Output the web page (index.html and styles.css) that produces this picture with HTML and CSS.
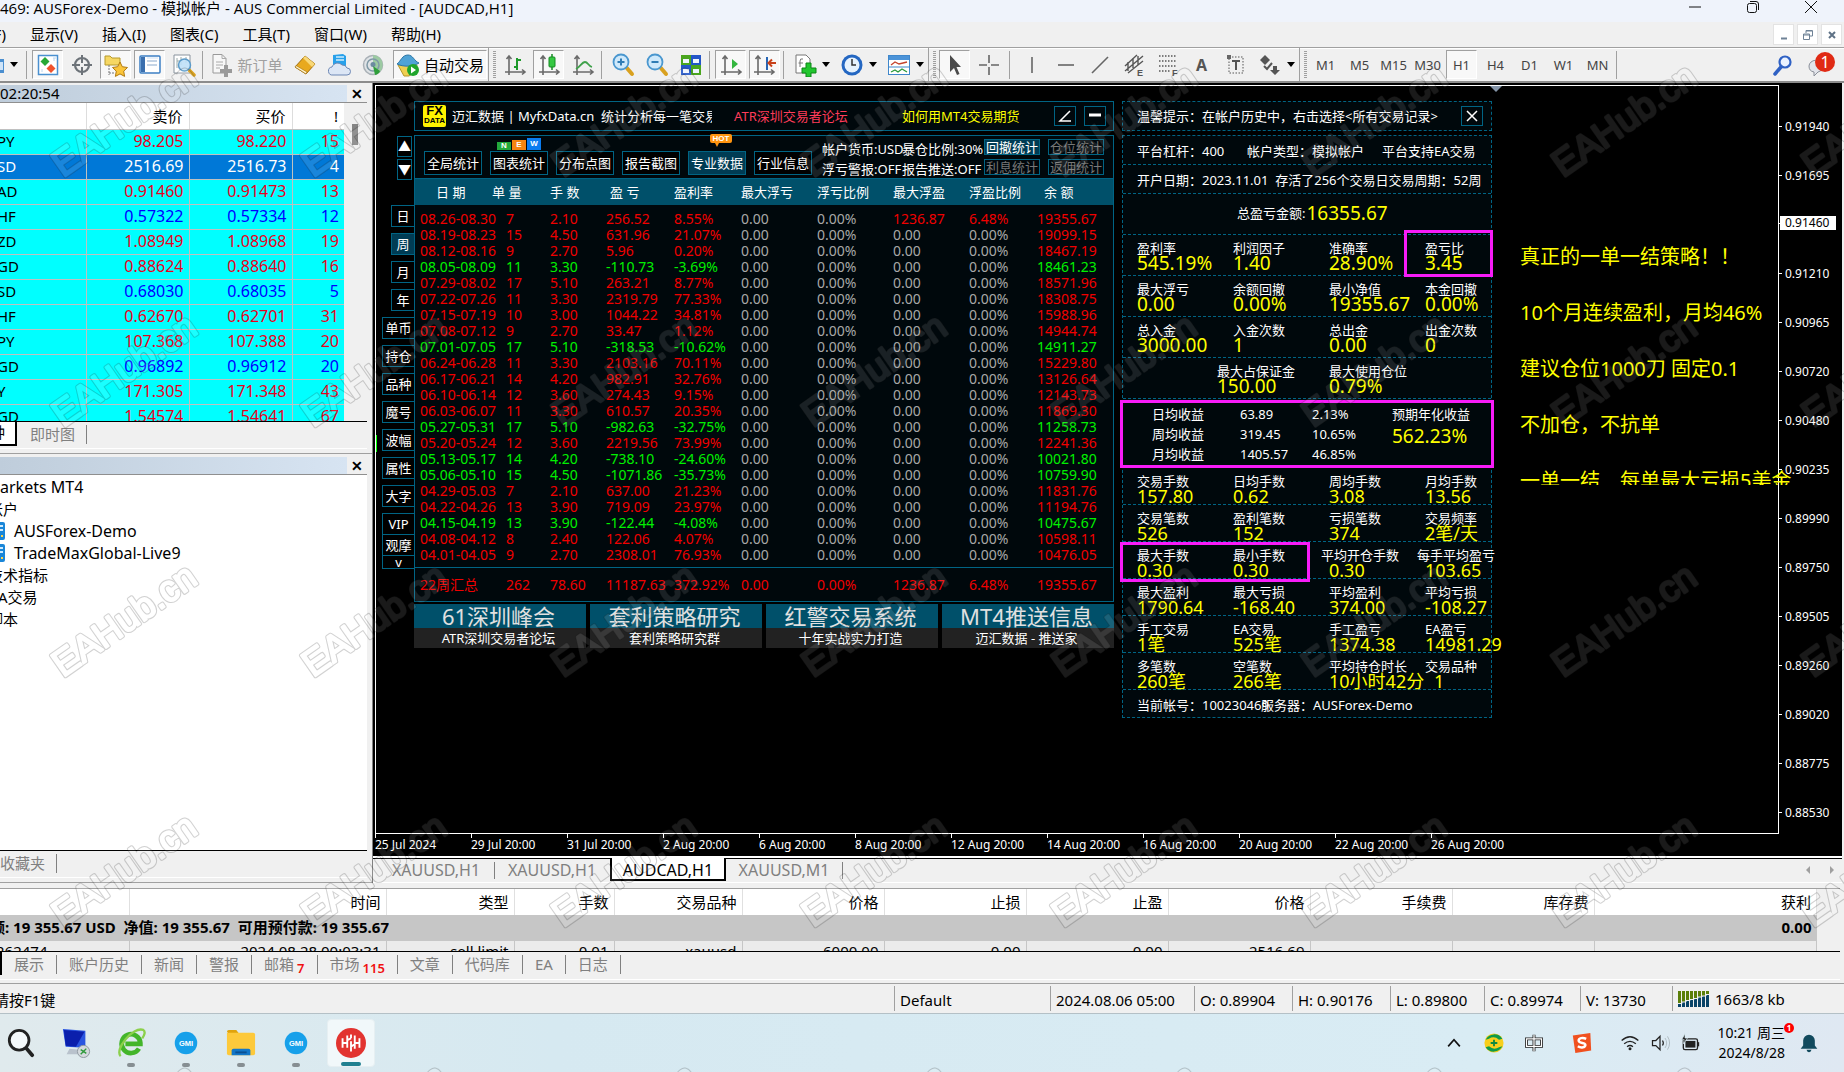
FILE: index.html
```html
<!DOCTYPE html>
<html lang="zh-CN">
<head>
<meta charset="utf-8">
<title>AUSForex-Demo - [AUDCAD,H1]</title>
<link rel="stylesheet" href="styles.css">
</head>
<body>
<header class="titlebar">
  <h1 class="title">469: AUSForex-Demo - 模拟帐户 - AUS Commercial Limited - [AUDCAD,H1]</h1>
  <div class="winctl">
    <button aria-label="最小化"><svg width="14" height="14" viewBox="0 0 14 14"><path d="M1 7h12" stroke="#111" fill="none"/></svg></button>
    <button aria-label="还原"><svg width="14" height="14" viewBox="0 0 14 14"><rect x="1.500" y="3.500" width="9" height="9" rx="2" stroke="#111" fill="none"/><path d="M4 1.500h6a2.500 2.500 0 0 1 2.500 2.500v6" stroke="#111" fill="none"/></svg></button>
    <button aria-label="关闭"><svg width="14" height="14" viewBox="0 0 14 14"><path d="M1 1l12 12M13 1L1 13" stroke="#111" fill="none"/></svg></button>
  </div>
</header>
<nav class="menubar">
  <button class="cut">(F)</button><button>显示(V)</button><button>插入(I)</button><button>图表(C)</button><button>工具(T)</button><button>窗口(W)</button><button>帮助(H)</button>
  <div class="mdictl">
    <button aria-label="最小化图表"><svg width="12" height="12" viewBox="0 0 12 12"><path d="M3 9.500h6" stroke="#6f8296" stroke-width="2"/></svg></button>
    <button aria-label="还原图表"><svg width="12" height="12" viewBox="0 0 12 12"><path d="M4 4V1.500h6.500V7H8M1.500 5h6v5.500h-6zM1.500 6h6M4 2h6" stroke="#6f8296" fill="none"/></svg></button>
    <button aria-label="关闭图表"><svg width="12" height="12" viewBox="0 0 12 12"><path d="M3 3l6 6M9 3L3 9" stroke="#5f7286" stroke-width="2"/></svg></button>
  </div>
</nav>

<div class="toolbar">
  <button class="tool first" aria-label="新图表"><svg width="6" height="24" viewBox="0 0 6 24"><path d="M0 6h4v14H0z" fill="#4b8fd0"/><path d="M0 9h3v8H0z" fill="#cfe4f8"/></svg><i class="caret"></i></button>
  <span class="sep"></span>
  <button class="tool on" aria-label="市场报价"><svg viewBox="0 0 24 24"><rect x="2.500" y="2.500" width="19" height="19" fill="#fff" stroke="#4a90d0" stroke-width="1.500"/><path d="M9 4l4.500 4.500L9 13 4.500 8.500z" fill="#27a835"/><path d="M15 20l-4.500-4.500L15 11l4.500 4.500z" fill="#f0532d"/><path d="M6 16v3M18 5v3M17 5h3" stroke="#bcd6ee"/></svg></button>
  <button class="tool" aria-label="数据窗口"><svg viewBox="0 0 24 24"><circle cx="12" cy="12" r="7" fill="none" stroke="#6d7379" stroke-width="2.200"/><path d="M12 2v8M12 14v8M2 12h8M14 12h8" stroke="#6d7379" stroke-width="2"/></svg></button>
  <button class="tool on" aria-label="导航"><svg viewBox="0 0 24 24"><path d="M1 3h5l2 2h8v7H1z" fill="#f6d763" stroke="#b69a2c"/><path d="M5 12v10M5 20h6" stroke="#777" stroke-dasharray="2 1"/><path d="M16 9l2.300 4.700 5.200.8-3.800 3.700.9 5.200-4.600-2.500-4.600 2.500.9-5.200-3.800-3.700 5.200-.8z" fill="#fbc53a" stroke="#b07a12"/></svg></button>
  <button class="tool on" aria-label="终端"><svg viewBox="0 0 24 24"><rect x="2" y="3" width="20" height="17" rx="1" fill="#fff" stroke="#3c7fc4" stroke-width="1.500"/><path d="M3 4h4v15H3z" fill="#3b6fae"/><path d="M9 8h10M9 12h10" stroke="#8aa9cc"/><path d="M9 5h11" stroke="#cfe0f3"/></svg></button>
  <button class="tool" aria-label="策略测试"><svg viewBox="0 0 24 24"><path d="M2 2h16v18H2z" fill="#fff" stroke="#8a949e"/><path d="M5 5v10M9 4v8M5 8h3M14 4v6" stroke="#9aa"/><path d="M17 17l5 5" stroke="#d9a11f" stroke-width="3.500" stroke-linecap="round"/><circle cx="12.500" cy="12" r="6" fill="#bfe0f7" fill-opacity=".9" stroke="#5b9bc9" stroke-width="1.500"/></svg></button>
  <span class="sep"></span>
  <button class="tool order" disabled><svg viewBox="0 0 24 24"><path d="M3 1.500h9l4 4V20H3z" fill="#f7f7f7" stroke="#999"/><path d="M12 1.500v4h4M6 9h7M6 12h7M6 15h4" stroke="#aaa" fill="none"/><path d="M14 12h4v4h4v4h-4v4h-4v-4h-4v-4h4z" fill="#9a9a9a"/></svg>新订单</button>
  <button class="tool" aria-label="MetaEditor"><svg viewBox="0 0 24 24"><path d="M2 14L12 3l10 8-9 10z" fill="#e8a91e" stroke="#a06d0c"/><path d="M12 3l10 8-3 3-9-9z" fill="#f8d878"/><path d="M2 14l11 7 1-2-11-6.500z" fill="#fff3c9" stroke="#a06d0c" stroke-width=".6"/></svg></button>
  <button class="tool" aria-label="虚拟主机"><svg viewBox="0 0 24 24"><path d="M6 2l10-1 3 2v10H6z" fill="#27a0ea"/><path d="M9 4h8M9 7h8" stroke="#cdeafb" stroke-width="1.500"/><path d="M6 22a4 4 0 0 1-1-8 6 6 0 0 1 10-2 5 5 0 0 1 5 3 3.500 3.500 0 0 1 0 7z" fill="#dce6f5" stroke="#6d87b4"/></svg></button>
  <button class="tool" aria-label="信号"><svg viewBox="0 0 24 24"><circle cx="12" cy="12" r="9.500" fill="#dfe3e6" stroke="#a9b0b6" stroke-width="1.500"/><path d="M12 2a10 10 0 0 1 4 19l-4-9z" fill="#9ccaa2"/><circle cx="12" cy="12" r="6" fill="none" stroke="#7f99a6" stroke-width="1.500"/><circle cx="12" cy="11.500" r="2.500" fill="#6c8ba0"/><path d="M12 13l2 9q4-1 5-4z" fill="#2e9e3a"/></svg></button>
  <button class="tool auto"><svg viewBox="0 0 24 24"><path d="M2 12h19l-2 7-6 4H8z" fill="#f0cf50" stroke="#b4962a"/><path d="M1 11c4-3 5-9 11-9 5 0 6 6 11 8-6 4-16 4-22 1z" fill="#4fa3d6" stroke="#2d76a5"/><circle cx="17" cy="17" r="6" fill="#1fa52c"/><path d="M15 13.500l5 3.500-5 3.500z" fill="#fff"/></svg>自动交易</button>
  <span class="grip"></span>
  <button class="tool" aria-label="柱状图"><svg viewBox="0 0 24 24"><path d="M6 3v19M2 19h20M3.500 6L6 3l2.500 3M19 16.500l3 2.500-3 2.500" stroke="#6a6a6a" stroke-width="1.600" fill="none"/><path d="M14 5v12M14 7h4M11 14h3" stroke="#1e9a2b" stroke-width="2"/></svg></button>
  <button class="tool on" aria-label="蜡烛图"><svg viewBox="0 0 24 24"><path d="M6 3v19M2 19h20M3.500 6L6 3l2.500 3M19 16.500l3 2.500-3 2.500" stroke="#6a6a6a" stroke-width="1.600" fill="none"/><path d="M15 1v16" stroke="#158a22" stroke-width="1.500"/><rect x="12" y="4" width="6" height="10" rx="1" fill="#35c842" stroke="#158a22"/></svg></button>
  <button class="tool" aria-label="折线图"><svg viewBox="0 0 24 24"><path d="M6 3v19M2 19h20M3.500 6L6 3l2.500 3M19 16.500l3 2.500-3 2.500" stroke="#6a6a6a" stroke-width="1.600" fill="none"/><path d="M5 16c4-2 6-7 9-7s3 4 7 5" stroke="#3fa14a" stroke-width="1.800" fill="none"/></svg></button>
  <span class="sep"></span>
  <button class="tool" aria-label="放大"><svg viewBox="0 0 24 24"><path d="M15 14l6 7" stroke="#d9a11f" stroke-width="4" stroke-linecap="round"/><circle cx="10" cy="9" r="7.500" fill="#cfe9fb" stroke="#4a97cf" stroke-width="1.800"/><path d="M10 5.500v7M6.500 9h7" stroke="#2f7cb5" stroke-width="2"/></svg></button>
  <button class="tool" aria-label="缩小"><svg viewBox="0 0 24 24"><path d="M15 14l6 7" stroke="#d9a11f" stroke-width="4" stroke-linecap="round"/><circle cx="10" cy="9" r="7.500" fill="#cfe9fb" stroke="#4a97cf" stroke-width="1.800"/><path d="M6.500 9h7" stroke="#2f7cb5" stroke-width="2"/></svg></button>
  <button class="tool" aria-label="平铺窗口"><svg viewBox="0 0 24 24"><path d="M2 2h10v10H2z" fill="#4aa51e"/><path d="M12 2h10v10H12z" fill="#2456c8"/><path d="M2 12h10v10H2z" fill="#2456c8"/><path d="M12 12h10v10H12z" fill="#4aa51e"/><path d="M4 6h6v4H4zM14 6h6v4h-6zM4 16h6v4H4zM14 16h6v4h-6z" fill="#eef4ff"/></svg></button>
  <span class="sep"></span>
  <button class="tool on" aria-label="自动滚动"><svg viewBox="0 0 24 24"><path d="M6 3v19M2 19h20M3.500 6L6 3l2.500 3M19 16.500l3 2.500-3 2.500" stroke="#6a6a6a" stroke-width="1.600" fill="none"/><path d="M13 6l6 5-6 5z" fill="#34b63f"/></svg></button>
  <button class="tool on" aria-label="图表平移"><svg viewBox="0 0 24 24"><path d="M5 3v19M1 19h20M2.500 6L5 3l2.500 3M18 16.500l3 2.500-3 2.500" stroke="#6a6a6a" stroke-width="1.600" fill="none"/><path d="M14 4v13" stroke="#2766b5" stroke-width="2"/><path d="M23 10h-6M19 6.500L15.500 10l3.500 3.500" stroke="#c8411a" stroke-width="2" fill="none"/></svg></button>
  <span class="sep"></span>
  <button class="tool drop" aria-label="指标"><svg viewBox="0 0 24 24"><path d="M3 2h10l4 4v14H3z" fill="#fff" stroke="#777"/><path d="M7 14V8q0-3 3-2M5.500 10H10" stroke="#777" fill="none"/><path d="M13 10h5v5h5v5h-5v4h-5v-4H9v-5h4z" fill="#21c62e" stroke="#0d8517"/></svg><i class="caret"></i></button>
  <button class="tool drop" aria-label="周期"><svg viewBox="0 0 24 24"><circle cx="12" cy="12" r="10.500" fill="#2467c2"/><circle cx="12" cy="12" r="7.500" fill="#e6f2fd"/><path d="M12 6v6h4" stroke="#333" stroke-width="1.500" fill="none"/></svg><i class="caret"></i></button>
  <button class="tool drop" aria-label="模板"><svg viewBox="0 0 24 24"><rect x="1.500" y="2.500" width="21" height="19" fill="#fff" stroke="#3f87cb"/><path d="M2 3h20v4H2z" fill="#4b93d8"/><path d="M2 14h20" stroke="#3f87cb"/><path d="M4 12l4-3 4 2 8-2" stroke="#c4432d" fill="none" stroke-width="1.300"/><path d="M4 19l4-2 3 2 4-3 5 3" stroke="#2b9a3c" fill="none" stroke-width="1.300"/></svg><i class="caret"></i></button>
  <span class="grip"></span>
  <button class="tool on" aria-label="光标"><svg viewBox="0 0 24 24"><path d="M7 2v17l4-4 3 7 2.500-1-3-7H18z" fill="#4a4a4a"/></svg></button>
  <button class="tool" aria-label="十字准线"><svg viewBox="0 0 24 24"><path d="M12 2v8M12 14v8M2 12h8M14 12h8" stroke="#666" stroke-width="1.600"/></svg></button>
  <span class="sep wide"></span>
  <button class="tool" aria-label="垂直线"><svg viewBox="0 0 24 24"><path d="M12 4v16" stroke="#666" stroke-width="1.600"/></svg></button>
  <button class="tool" aria-label="水平线"><svg viewBox="0 0 24 24"><path d="M4 12h16" stroke="#666" stroke-width="1.600"/></svg></button>
  <button class="tool" aria-label="趋势线"><svg viewBox="0 0 24 24"><path d="M4 20L20 4" stroke="#666" stroke-width="1.600"/></svg></button>
  <button class="tool" aria-label="等距通道"><svg viewBox="0 0 24 24"><path d="M3 13L15 2M3 18L21 3M6 20L21 8M6 9v9M11 5v10M16 3v9" stroke="#555" stroke-width="1.400"/><text x="15" y="23" class="glyph">E</text></svg></button>
  <button class="tool" aria-label="斐波那契"><svg viewBox="0 0 24 24"><path d="M3 3h18M3 8h18M3 13h18M3 18h12" stroke="#555" stroke-width="1.400" stroke-dasharray="1.500 1.500"/><text x="16" y="23" class="glyph">F</text></svg></button>
  <button class="tool letter" aria-label="文字">A</button>
  <button class="tool" aria-label="文字标签"><svg viewBox="0 0 24 24"><rect x="5" y="4" width="14" height="16" fill="none" stroke="#555" stroke-dasharray="1.500 1.500"/><path d="M8 8h8M12 8v9" stroke="#555" stroke-width="2"/><path d="M3 2h4v4H3z" fill="#666"/></svg></button>
  <button class="tool drop" aria-label="箭头"><svg viewBox="0 0 24 24"><path d="M7 2l5 5-5 5-5-5z" fill="#555"/><path d="M17 22l-5-5h3v-4h4v4h3z" fill="#555"/><path d="M6 13l3 3 5-6" stroke="#555" stroke-width="2" fill="none"/></svg><i class="caret"></i></button>
  <span class="grip"></span>
  <button class="tool tf">M1</button><button class="tool tf">M5</button><button class="tool tf">M15</button><button class="tool tf">M30</button><button class="tool tf on">H1</button><button class="tool tf">H4</button><button class="tool tf">D1</button><button class="tool tf">W1</button><button class="tool tf">MN</button>
  <span class="sep"></span>
  <span class="grow"></span>
  <button class="tool search" aria-label="搜索"><svg viewBox="0 0 24 24"><path d="M10 14l-6 7" stroke="#2f61c4" stroke-width="3.500" stroke-linecap="round"/><circle cx="14" cy="9" r="5.500" fill="#eaf2ff" stroke="#2f61c4" stroke-width="2.200"/></svg></button>
  <button class="tool chat" aria-label="消息"><svg viewBox="0 0 24 24"><path d="M1 13a7 6 0 1 1 9 6l-4 4v-4a6 6 0 0 1-5-6z" fill="#e2e4ea" stroke="#8b909a"/></svg><b class="count">1</b></button>
</div>

<main class="workspace">
  <aside class="left">
    <section class="dock">
      <div class="dockhead"><h2>02:20:54</h2><button aria-label="关闭市场报价">✕</button></div>
      <div class="watch">
        <table class="quotes">
          <thead><tr><th></th><th>卖价</th><th>买价</th><th>!</th></tr></thead>
          <tbody id="quotes"></tbody>
        </table>
        <div class="scroll"><span class="thumb"></span></div>
      </div>
      <div class="docktabs"><button class="current">钟</button><button>即时图</button></div>
    </section>
    <section class="dock navi">
      <div class="dockhead"><h2></h2><button aria-label="关闭导航">✕</button></div>
      <ul class="tree">
        <li class="latin">arkets MT4</li>
        <li class="half">账户</li>
        <li class="acct latin"><svg width="5" height="18" viewBox="0 0 5 18"><path d="M0 0h3q2 0 2 2v14q0 2-2 2H0z" fill="#1a86d8"/><path d="M0 4h3M0 8h3" stroke="#cfeafd" stroke-width="2"/><path d="M1 14h2" stroke="#ffd54a" stroke-width="2"/></svg>AUSForex-Demo</li>
        <li class="acct latin"><svg width="5" height="18" viewBox="0 0 5 18"><path d="M0 0h3q2 0 2 2v14q0 2-2 2H0z" fill="#1a86d8"/><path d="M0 4h3M0 8h3" stroke="#cfeafd" stroke-width="2"/><path d="M1 14h2" stroke="#ffd54a" stroke-width="2"/></svg>TradeMaxGlobal-Live9</li>
        <li class="half">技术指标</li>
        <li>A交易</li>
        <li class="half">脚本</li>
      </ul>
      <div class="docktabs"><button class="fav">收藏夹</button></div>
    </section>
  </aside>

  <section class="center">
    <div class="chart">
      <div class="plot">
        <div class="sidecol">
          <button class="arrow">▲</button><button class="arrow">▼</button>
          <div class="sidetabs">
            <button class="s">日</button><button class="s on">周</button><button class="s">月</button><button class="s">年</button>
            <button>单币</button><button>持仓</button><button>品种</button><button>魔号</button><button>波幅</button><button>属性</button><button>大字</button>
          </div>
          <div class="sidemore"><button>VIP</button><button>观摩</button><button class="v">v</button></div>
        </div>

        <div class="fx">
          <div class="fxhead">
            <span class="fxlogo"><b>FX</b><b class="small">DATA</b></span>
            <span class="brand">迈汇数据 | MyfxData.cn&nbsp; 统计分析每一笔交易</span>
            <a href="#" class="hotlink">ATR深圳交易者论坛</a>
            <a href="#" class="tiplink">如何用MT4交易期货</a>
            <button aria-label="缩放"><svg width="14" height="14" viewBox="0 0 14 14"><path d="M12 2L2 12h11" stroke="#fff" stroke-width="1.500" fill="none"/></svg></button>
            <button aria-label="收起"><svg width="14" height="14" viewBox="0 0 14 14"><path d="M1 6h12" stroke="#fff" stroke-width="3"/></svg></button>
          </div>
          <div class="fxbody">
            <div class="fxnav">
              <button>全局统计</button>
              <button>图表统计<span class="new"><i>N</i><i>E</i><i>W</i></span></button>
              <button>分布点图</button>
              <button>报告截图</button>
              <button class="on">专业数据<span class="hot">HOT</span></button>
              <button>行业信息</button>
              <div class="facts"><span>帐户货币:USD</span><span>暴仓比例:30%</span><span>浮亏警报:OFF</span><span>报告推送:OFF</span></div>
              <div class="minis"><button class="on">回撤统计</button><button>仓位统计</button><button>利息统计</button><button>返佣统计</button></div>
            </div>
            <table class="weeks">
              <thead><tr><th>日 期</th><th>单 量</th><th>手 数</th><th>盈 亏</th><th>盈利率</th><th>最大浮亏</th><th>浮亏比例</th><th>最大浮盈</th><th>浮盈比例</th><th>余 额</th></tr></thead>
              <tbody id="weeks"></tbody>
              <tfoot><tr><td>22周汇总</td><td>262</td><td>78.60</td><td>11187.63</td><td>372.92%</td><td>0.00</td><td>0.00%</td><td>1236.87</td><td>6.48%</td><td>19355.67</td></tr></tfoot>
            </table>
          </div>
          <div class="ads">
            <a href="#"><b>61深圳峰会</b><span>ATR深圳交易者论坛</span></a>
            <a href="#"><b>套利策略研究</b><span>套利策略研究群</span></a>
            <a href="#"><b>红警交易系统</b><span>十年实战实力打造</span></a>
            <a href="#"><b>MT4推送信息</b><span>迈汇数据 - 推送家</span></a>
          </div>
        </div>

        <div class="stats">
          <div class="tip"><span>温馨提示：在帐户历史中，右击选择&lt;所有交易记录&gt;</span><button aria-label="关闭提示"><svg width="14" height="14" viewBox="0 0 14 14"><path d="M2 2l10 10M12 2L2 12" stroke="#fff" stroke-width="1.500"/></svg></button></div>
          <div class="sheet">
            <div class="line l3"><span>平台杠杆：400</span><span>帐户类型：模拟帐户</span><span>平台支持EA交易</span></div>
            <div class="line"><span>开户日期：2023.11.01&nbsp; 存活了256个交易日交易周期：52周</span></div>
            <div class="total"><span>总盈亏金额:</span><b>16355.67</b></div>
            <dl class="row tall"><div><dt>盈利率</dt><dd>545.19%</dd></div><div><dt>利润因子</dt><dd>1.40</dd></div><div><dt>准确率</dt><dd>28.90%</dd></div><div><dt>盈亏比</dt><dd>3.45</dd></div><div class="mark m1"></div></dl>
            <dl class="row tall"><div><dt>最大浮亏</dt><dd>0.00</dd></div><div><dt>余额回撤</dt><dd>0.00%</dd></div><div><dt>最小净值</dt><dd>19355.67</dd></div><div><dt>本金回撤</dt><dd>0.00%</dd></div></dl>
            <dl class="row tall"><div><dt>总入金</dt><dd>3000.00</dd></div><div><dt>入金次数</dt><dd>1</dd></div><div><dt>总出金</dt><dd>0.00</dd></div><div><dt>出金次数</dt><dd>0</dd></div></dl>
            <dl class="row tall two"><div><dt>最大占保证金</dt><dd>150.00</dd></div><div><dt>最大使用仓位</dt><dd>0.79%</dd></div></dl>
            <div class="avg">
              <span>日均收益</span><span>63.89</span><span>2.13%</span><span>预期年化收益</span>
              <span>周均收益</span><span>319.45</span><span>10.65%</span><b>562.23%</b>
              <span>月均收益</span><span>1405.57</span><span>46.85%</span><span></span>
              <div class="mark m2"></div>
            </div>
            <dl class="row"><div><dt>交易手数</dt><dd>157.80</dd></div><div><dt>日均手数</dt><dd>0.62</dd></div><div><dt>周均手数</dt><dd>3.08</dd></div><div><dt>月均手数</dt><dd>13.56</dd></div></dl>
            <dl class="row"><div><dt>交易笔数</dt><dd>526</dd></div><div><dt>盈利笔数</dt><dd>152</dd></div><div><dt>亏损笔数</dt><dd>374</dd></div><div><dt>交易频率</dt><dd>2笔/天</dd></div></dl>
            <dl class="row"><div><dt>最大手数</dt><dd>0.30</dd></div><div><dt>最小手数</dt><dd>0.30</dd></div><div class="out"><dt>平均开仓手数</dt><dd>0.30</dd></div><div class="out"><dt>每手平均盈亏</dt><dd>103.65</dd></div><div class="mark m3"></div></dl>
            <dl class="row"><div><dt>最大盈利</dt><dd>1790.64</dd></div><div><dt>最大亏损</dt><dd>-168.40</dd></div><div><dt>平均盈利</dt><dd>374.00</dd></div><div><dt>平均亏损</dt><dd>-108.27</dd></div></dl>
            <dl class="row"><div><dt>手工交易</dt><dd>1笔</dd></div><div><dt>EA交易</dt><dd>525笔</dd></div><div><dt>手工盈亏</dt><dd>1374.38</dd></div><div><dt>EA盈亏</dt><dd>14981.29</dd></div></dl>
            <dl class="row"><div><dt>多笔数</dt><dd>260笔</dd></div><div><dt>空笔数</dt><dd>266笔</dd></div><div><dt>平均持仓时长</dt><dd>10小时42分</dd></div><div class="in"><dt>交易品种</dt><dd>1</dd></div></dl>
            <div class="acc"><span>当前帐号：100230469</span><span>服务器：AUSForex-Demo</span></div>
          </div>
        </div>

        <div class="notes">
          <p>真正的一单一结策略！！</p><p>10个月连续盈利，月均46%</p><p>建议仓位1000刀 固定0.1</p><p>不加仓，不抗单</p><p>一单一结　每单最大亏损5美金</p>
        </div>
        <i class="shift"></i><i class="candle"></i>
      </div>
      <ol class="prices" id="prices"></ol>
      <ol class="times" id="times"></ol>
    </div>
    <div class="charttabs"><button>XAUUSD,H1</button><button>XAUUSD,H1</button><button class="current">AUDCAD,H1</button><button>XAUUSD,M1</button><span class="nav"><i class="prev"></i><i class="next"></i></span></div>
  </section>
</main>

<section class="terminal">
  <div class="orders">
    <table class="trades">
      <colgroup><col class="c1"><col class="c2"><col class="c3"><col class="c4"><col class="c3"><col class="c5"><col class="c5"><col class="c5"><col class="c5"><col class="c5"><col class="c5"><col></colgroup>
      <thead><tr><th></th><th>时间</th><th>类型</th><th>手数</th><th>交易品种</th><th>价格</th><th>止损</th><th>止盈</th><th>价格</th><th>手续费</th><th>库存费</th><th>获利</th></tr></thead>
      <tbody>
        <tr class="sum"><td colspan="11">额: 19 355.67 USD&nbsp; 净值: 19 355.67&nbsp; 可用预付款: 19 355.67</td><td>0.00</td></tr>
        <tr class="pend"><td>262474</td><td>2024.08.28 00:03:31</td><td>sell limit</td><td>0.01</td><td>xauusd</td><td>6000.00</td><td>0.00</td><td>0.00</td><td>2516.69</td><td></td><td></td><td></td></tr>
      </tbody>
    </table>
  </div>
  <div class="termtabs"><button>展示</button><button>账户历史</button><button>新闻</button><button>警报</button><button>邮箱<sub>7</sub></button><button>市场<sub>115</sub></button><button>文章</button><button>代码库</button><button>EA</button><button>日志</button></div>
</section>

<footer class="status">
  <span class="help">请按F1键</span><span class="prof">Default</span><span class="w144">2024.08.06 05:00</span><span class="w98">O: 0.89904</span><span class="w98">H: 0.90176</span><span class="w94">L: 0.89800</span><span class="w96">C: 0.89974</span><span class="w92">V: 13730</span>
  <span class="net"><svg width="31" height="16" viewBox="0 0 31 16"><path d="M0 0h31v16H0z" fill="#5b7f0a"/><path d="M0 13h4v3H0zM4 11h4v5H4zM8 10h4v6H8zM12 9h4v7h-4zM16 8h4v8h-4zM20 6h4v10h-4zM24 5h4v11h-4zM28 4h3v12h-3z" fill="#0a4468"/><path d="M0 12.500h4v-1.500h4v-1.500h4v-1h4v-1h4v-1.500h4v-1h4v-1.500h3" stroke="#f0f0f0" fill="none"/><path d="M3.500 0v16M7.500 0v16M11.500 0v16M15.500 0v16M19.500 0v16M23.500 0v16M27.500 0v16" stroke="#f0f0f0"/></svg>1663/8 kb</span>
</footer>

<div class="taskbar">
  <div class="apps">
    <button aria-label="搜索"><svg viewBox="0 0 32 32"><circle cx="14" cy="13" r="10.500" fill="#f4f8fa" stroke="#222" stroke-width="3"/><path d="M22 22l6 7" stroke="#222" stroke-width="4" stroke-linecap="round"/></svg></button>
    <button aria-label="远程桌面"><svg viewBox="0 0 32 32"><path d="M2 1l24 2v18L5 20z" fill="#2a55e0"/><path d="M3 2l22 2-9 16L5 19z" fill="#0b1fac"/><path d="M9 22l8 1 1 5H6z" fill="#b9c2cc"/><circle cx="24" cy="25" r="6.500" fill="#d4d9dd" stroke="#8d969e"/><path d="M21 23l3 2-3 3M27 22l-3 3 3 2" stroke="#2f9a3c" stroke-width="1.500" fill="none"/></svg></button>
    <button class="run" aria-label="浏览器"><svg viewBox="0 0 32 32"><path d="M24.500 22a10 10 0 1 1 1.500-6v1H10" fill="none" stroke="#43b52a" stroke-width="5"/><path d="M5 30C-2 23 18-2 29 2c3 2 1 6-1 9" fill="none" stroke="#8bd04b" stroke-width="2.500"/></svg></button>
    <button class="run" aria-label="GMI"><svg viewBox="0 0 32 32"><circle cx="16" cy="16" r="12" fill="#17a0ea"/><text x="16" y="19" text-anchor="middle" class="gmi">GMI</text></svg></button>
    <button class="run" aria-label="文件夹"><svg viewBox="0 0 32 32"><path d="M1 4q0-2 2-2h8l3 4H3z" fill="#e0a30c"/><path d="M1 5h28q2 0 2 2v20q0 2-2 2H3q-2 0-2-2z" fill="#fdc93b"/><path d="M6 29v-5q0-2 2-2h16q2 0 2 2v5z" fill="#1276c8"/><path d="M10 26h12" stroke="#0a4f92" stroke-width="2"/></svg></button>
    <button class="run" aria-label="GMI"><svg viewBox="0 0 32 32"><circle cx="16" cy="16" r="12" fill="#17a0ea"/><text x="16" y="19" text-anchor="middle" class="gmi">GMI</text></svg></button>
    <button class="run active" aria-label="MT4"><svg viewBox="0 0 32 32"><circle cx="16" cy="16" r="16" fill="#e23430"/><path d="M7 11v10M12 8v13M7 16h5M16 7v4M16 14v11M20 8v14M25 11v10M20 16h5M12 13l4-2M16 20l4-3" stroke="#fff" stroke-width="2" fill="none"/></svg></button>
  </div>
  <div class="tray">
    <svg class="up" viewBox="0 0 24 24"><path d="M5 16l7-8 7 8" stroke="#111" stroke-width="2" fill="none"/></svg>
    <svg class="g1" viewBox="0 0 24 24"><circle cx="12" cy="12" r="11.500" fill="#f8cf1c"/><path d="M2 8A11.500 11.500 0 0 1 22 7l-4 1Q12 3 6 7zM22 16A11.500 11.500 0 0 1 2 17l4-1q6 5 12 1z" fill="#0f9b4a"/><path d="M12 8v8M8 12h8" stroke="#0f8a3f" stroke-width="2.200"/></svg>
    <svg class="g2" viewBox="0 0 24 24"><path d="M3 7h18v9H3zM12 2v20" stroke="#222" stroke-width="3.500" fill="none"/><path d="M3 7h18v9H3zM12 2v20" stroke="#fff" stroke-width="1.500" fill="none"/></svg>
    <svg class="g3" viewBox="0 0 24 24"><path d="M1 3l21-3 1 21-19 3z" fill="#f0501f"/><path d="M17 7c-4-2-9-1-9 2 0 4 9 2 8 6-1 3-6 3-9 1" stroke="#fff" stroke-width="3" fill="none"/></svg>
    <svg class="g4" viewBox="0 0 24 24"><path d="M2 9q10-9 20 0M5 13q7-6 14 0M8.500 16.500q3.500-3 7 0" stroke="#222" stroke-width="1.600" fill="none"/><circle cx="12" cy="19" r="1.800" fill="#222"/></svg>
    <svg class="g5" viewBox="0 0 24 24"><path d="M3 9h4l5-5v16l-5-5H3z" stroke="#222" stroke-width="1.500" fill="none"/><path d="M15 9q2 3 0 6" stroke="#222" stroke-width="1.500" fill="none"/><path d="M18 6q4 6 0 12M21 4q5 8 0 16" stroke="#a8b4ba" fill="none"/></svg>
    <svg class="g6" viewBox="0 0 24 24"><rect x="4" y="7" width="17" height="13" rx="2" fill="none" stroke="#222" stroke-width="1.600"/><rect x="6.500" y="9.500" width="12" height="8" fill="#222"/><path d="M22 11v5" stroke="#222" stroke-width="2"/><path d="M6 1L2 8h3l-1 5 5-7H6z" fill="#222" stroke="#d9edf4" stroke-width=".8"/></svg>
    <div class="clock"><span>10:21 周三</span><span>2024/8/28</span><b>1</b></div>
    <svg class="bell" viewBox="0 0 24 24"><path d="M12 2a7 7 0 0 1 7 7v6l3 4H2l3-4V9a7 7 0 0 1 7-7z" fill="#124a5e"/><path d="M9 20h6q-1 3-3 3t-3-3z" fill="#124a5e"/></svg>
  </div>
</div>

<svg class="watermark" aria-hidden="true">
  <defs>
    <mask id="ring" maskUnits="userSpaceOnUse" x="0" y="0" width="250" height="250">
      <g transform="translate(63 178) rotate(-35)" class="wm"><text stroke="#fff" fill="#fff" stroke-width="4">EAHub.cn</text><text stroke="#000" fill="#000" stroke-width="2">EAHub.cn</text></g>
    </mask>
    <pattern id="tile" width="250" height="250" patternUnits="userSpaceOnUse">
      <g transform="translate(63 178) rotate(-35)" class="wm" opacity=".1"><text stroke="#fff" fill="#fff" stroke-width="3">EAHub.cn</text></g>
      <rect width="250" height="250" fill="#000" fill-opacity=".18" mask="url(#ring)"/>
    </pattern>
  </defs>
  <rect width="100%" height="100%" fill="url(#tile)"/>
</svg>
<script src="app.js"></script>
</body>
</html>
```
FILE: styles.css
```css
* { box-sizing: border-box; }
body {
  margin: 0; min-height: 100vh; position: relative; overflow-x: hidden;
  display: flex; flex-direction: column;
  background: #f0f0f0; color: #000;
  font: 15px/20px "Noto Sans", "Noto Sans CJK SC", sans-serif;
}
button { font: inherit; color: inherit; background: none; border: 0; padding: 0; margin: 0; white-space: nowrap; }
a { color: inherit; text-decoration: none; }
ul, ol, dl, dd, p, h1, h2 { margin: 0; padding: 0; list-style: none; font: inherit; }
table { border-collapse: collapse; border-spacing: 0; table-layout: fixed; }
td, th { padding: 0; font-weight: inherit; white-space: nowrap; }

.titlebar { height: 22px; display: flex; justify-content: space-between; background: #eff3fb; overflow: hidden; }
.title { line-height: 16px; white-space: nowrap; font-family: "Open Sans", "Noto Sans CJK SC", sans-serif; }
.winctl { display: flex; padding-right: 4px; }
.winctl button { width: 58px; height: 14px; line-height: 14px; }
.menubar { height: 25px; display: flex; align-items: flex-start; gap: 24px; padding: 2px 2px 0 0; }
.menubar .cut { width: 6px; display: flex; justify-content: flex-end; overflow: hidden; }
.mdictl { margin-left: auto; display: flex; gap: 3px; }
.mdictl button { width: 21px; height: 21px; background: #fff; border: 1px solid #e3e3e3; display: grid; place-items: center; }

.toolbar { height: 36px; display: flex; align-items: center; border-top: 1px solid #a0a0a0; border-bottom: 2px solid #8c8c8c; box-shadow: inset 0 1px #fff; padding-right: 8px; }
.tool { width: 31px; height: 29px; margin: 0 1px 0 2px; flex: none; display: flex; align-items: center; justify-content: center; }
.tool svg { width: 24px; height: 24px; flex: none; }
.tool.on, .tool.auto { background: #f8f8f8; border: 1px solid #a0a0a0; border-right-color: #fff; border-bottom-color: #fff; }
.tool.first { width: 24px; margin: 0; justify-content: flex-start; gap: 4px; }
.tool.first svg { width: 6px; }
.tool.order { width: 81px; margin: 0; color: #a0a0a0; gap: 3px; }
.tool.auto { width: 94px; margin: 0 1px 0 4px; gap: 4px; }
.tool.drop { width: 44px; gap: 5px; }
.tool.letter { font-weight: 700; font-size: 16px; color: #555; }
.tool.tf { font-size: 13px; color: #444; }
.tool.search { margin-right: 4px; }
.tool.chat { position: relative; }
.count { position: absolute; right: 0; top: 2px; width: 20px; height: 20px; border-radius: 10px; background: #e02a14; color: #fff; font-weight: 400; font-size: 16px; line-height: 20px; text-align: center; }
.caret { border: 4px solid transparent; border-top: 5px solid #000; border-bottom: 0; flex: none; }
.sep { width: 6px; height: 28px; flex: none; background: linear-gradient(#a0a0a0, #a0a0a0) 2px 0 / 1px 100% no-repeat; }
.sep.wide { width: 9px; background-position-x: 4px; }
.grip { width: 9px; height: 33px; flex: none; border-left: 1px solid #a0a0a0; background: repeating-linear-gradient(#a0a0a0 0 1px, transparent 1px 2px) 4px 3px / 3px 27px no-repeat; }
.grow { flex: 1; }
.glyph { font: 700 9px "Liberation Sans", sans-serif; fill: #555; }

.workspace { flex: 1 0 auto; display: flex; }
.left { width: 372px; flex: none; display: flex; flex-direction: column; border-bottom: 1px solid #a0a0a0; }
.dock { display: flex; flex-direction: column; padding: 2px 5px 4px 0; border-bottom: 1px solid #a0a0a0; }
.navi { flex: 1; padding-top: 3px; border: 0; }
.dockhead { height: 18px; display: flex; border-bottom: 1px solid #8f8f8f; }
.dockhead h2 { flex: 1; height: 17px; line-height: 16px; background: linear-gradient(90deg, #bfcddb, #d7e4f2); }
.dockhead button { width: 20px; line-height: 16px; font-size: 14px; font-weight: 700; }
.watch { height: 318px; display: flex; overflow: hidden; background: #fff; }
.quotes { width: 344px; flex: none; }
.quotes th { height: 26px; font-weight: 400; text-align: right; padding-right: 6px; border-right: 1px solid #ddd; border-bottom: 1px solid #c0c0c0; }
.quotes th:nth-child(1) { width: 86px; }
.quotes th:nth-child(2), .quotes th:nth-child(3) { width: 103px; }
.quotes td { height: 25px; line-height: 22px; padding-bottom: 2px; text-align: right; padding-right: 5px; background: #0ff; border-right: 1px solid #c0c0c0; border-bottom: 1px solid #c0c0c0; color: #e8001c; font-size: 16px; }
.quotes td:first-child { text-align: left; text-indent: -3px; color: #000; overflow: hidden; font-size: 15px; }
.quotes td:last-child, .quotes th:last-child { border-right: 0; }
.quotes tr.down td { color: #00f; }
.quotes tr.sel td { background: #0078d7; color: #fff; }
.quotes tr.down td:first-child { color: #000; }
.scroll { flex: 1; background: #f0f0f0; padding: 21px 0 0 8px; }
.thumb { display: block; width: 6px; height: 21px; background: #858585; }
.docktabs { height: 28px; display: flex; align-items: flex-start; border-top: 1px solid #000; border-bottom: 1px solid #fff; color: #808080; }
.docktabs button { height: 24px; padding: 0 12px 0 13px; position: relative; }
.docktabs button:not(.current)::after { content: ""; position: absolute; right: 0; top: 3px; height: 19px; border-right: 1px solid #808080; }
.docktabs .current { width: 17px; padding: 0 10px 0 0; color: #000; background: #fff; border: 1px solid #000; border-width: 0 2px 2px 0; display: flex; justify-content: flex-end; overflow: hidden; }
.docktabs .fav { padding-left: 0; }
.tree { flex: 1; background: #fff; padding-top: 1px; }
.tree li { height: 22px; line-height: 22px; }
.half { text-indent: -12px; }
.latin { font-size: 16px; }
.acct { display: flex; align-items: center; gap: 9px; }
.tree li:nth-child(6) { text-indent: -2px; }

.center { flex: 1; min-width: 0; display: flex; flex-direction: column; border-left: 1px solid #808080; padding-right: 2px; }
.chart { flex: 1; background: #000; color: #fff; display: grid; grid-template: 1fr 22px / 1fr 63px; padding: 2px 0 0 2px; }
.plot { border: 1px solid #fff; display: flex; align-items: flex-start; padding: 15px 0 20px 6px; position: relative; z-index: 1; min-width: 0; font-size: 13px; line-height: 18px; }
.sidecol { width: 32px; flex: none; padding-top: 35px; display: flex; flex-direction: column; align-items: flex-end; font-size: 13px; }
.sidecol button { border: 1px solid #006484; border-right: 0; width: 32px; height: 22px; line-height: 20px; overflow: hidden; }
.sidecol .arrow { width: 15px; margin-right: 2px; border-right: 1px solid #006484; margin-bottom: 2px; height: 21px; line-height: 19px; font-size: 13px; }
.sidetabs { margin-top: 23px; display: flex; flex-direction: column; align-items: flex-end; gap: 6px; }
.sidecol .s { width: 23px; }
.sidecol .s.on { background: #003c54; }
.sidemore { margin-top: 6px; display: flex; flex-direction: column; }
.sidecol .sidemore button { height: 21px; border-bottom: 0; line-height: 19px; }
.sidecol .sidemore .v { height: 14px; line-height: 11px; border-bottom: 1px solid #006484; }

.fx { width: 700px; flex: none; }
.fxhead { height: 30px; border: 1px solid #006484; background: #00080c; display: flex; align-items: center; padding: 0 7px 0 8px; }
.fxlogo { width: 23px; height: 22px; background: #fff200; border-radius: 2px; color: #000; display: flex; flex-direction: column; align-items: center; font: 700 13px/12px "Liberation Sans", sans-serif; }
.fxlogo .small { font-size: 8px; line-height: 8px; }
.brand { width: 260px; margin: 0 22px 0 6px; white-space: nowrap; overflow: hidden; flex: none; }
.hotlink { color: #ff3c5a; width: 168px; flex: none; }
.tiplink { color: #ff0; flex: 1; }
.fxhead button { width: 22px; height: 20px; margin-left: 8px; border: 1px solid #006484; display: grid; place-items: center; }
.fxbody { margin-top: 4px; border: 1px solid #006484; background: #00080c; }
.fxnav { height: 43px; display: flex; align-items: flex-start; gap: 8px; padding-left: 9px; border-bottom: 1px solid #006484; }
.fxnav > button { position: relative; width: 58px; height: 24px; margin-top: 15px; border: 1px solid #006484; background: #000; }
.fxnav > button.on, .minis .on { background: #003c54; }
.new { position: absolute; left: 6px; bottom: 24px; display: flex; align-items: flex-end; gap: 1px; font: 700 8px/8px "Liberation Sans", sans-serif; }
.new i { width: 14px; height: 8px; font-style: normal; background: #22a83c; }
.new i:nth-child(2) { background: #f58410; height: 10px; line-height: 10px; }
.new i:nth-child(3) { background: #0a7cf0; height: 12px; line-height: 12px; }
.hot { position: absolute; left: 21px; top: -18px; width: 22px; height: 9px; border-radius: 2px; background: #ff9410; font: 700 8px/9px "Liberation Sans", sans-serif; }
.hot::after { content: ""; position: absolute; left: 5px; top: 9px; border: 2px solid transparent; border-top: 4px solid #ff9410; border-bottom: 0; }
.facts { width: 154px; display: grid; grid-template-columns: 80px 1fr; line-height: 20px; padding-top: 3px; margin-left: 2px; white-space: nowrap; }
.minis { display: grid; grid-template-columns: 56px 56px; gap: 4px 8px; padding-top: 3px; }
.minis button { height: 16px; line-height: 14px; border: 1px solid #006484; color: #777; overflow: hidden; }
.minis .on { color: #fff; }
.weeks { display: block; }
.weeks thead, .weeks tbody, .weeks tfoot { display: block; }
.weeks tr { display: grid; }
.weeks th { font-weight: 400; text-align: left; line-height: 26px; }
.weeks thead tr { background: #00506a; grid-template-columns: 56px 58px 60px 64px 67px 76px 76px 76px 75px 60px; padding-left: 21px; }
.weeks tbody tr, .weeks tfoot tr { grid-template-columns: 86px 44px 56px 68px 67px 76px 76px 76px 68px 70px; padding-left: 5px; font-size: 14px; line-height: 16px; color: #f00000; }
.weeks tbody { padding: 6px 0 4px; }
.weeks tbody tr.loss { color: #00f000; }
.weeks tbody td.nil { color: #a8a8a8; }
.weeks tfoot { border-top: 1px solid #006484; padding: 9px 0 8px; }
.ads { margin-top: 2px; display: grid; grid-template-columns: repeat(4, 1fr); gap: 4px; text-align: center; }
.ads a { display: flex; flex-direction: column; background: #222; line-height: 20px; }
.ads b { height: 24px; font-weight: 400; font-size: 22px; line-height: 24px; background: #00506a; color: #e0e0e0; overflow: hidden; }
.ads b, .ads span { padding-right: 3px; }

.stats { width: 370px; flex: none; margin-left: 8px; white-space: nowrap; }
.tip { height: 30px; border: 1px dashed #006484; background: #00080c; padding: 0 8px 0 14px; display: flex; align-items: center; justify-content: space-between; }
.tip button { width: 22px; height: 20px; border: 1px solid #006484; display: grid; place-items: center; }
.sheet { margin-top: 4px; border: 1px dashed #006484; background: #00080c; }
.line { height: 29px; line-height: 30px; padding-left: 14px; border-bottom: 1px dashed #006484; }
.l3 { display: grid; grid-template-columns: 110px 135px 1fr; }
.total { height: 41px; line-height: 38px; padding-left: 114px; border-bottom: 1px dashed #006484; display: flex; gap: 1px; }
.total b, .row dd, .avg b { font-weight: 400; font-size: 18px; color: #ff0; }
.total b, .row.tall dd { font-size: 19px; }
.row { height: 37px; padding: 6px 0 0 14px; display: grid; grid-template-columns: repeat(4, 96px); align-items: start; border-bottom: 1px dashed #006484; position: relative; width: 368px; }
.row.tall { height: 41px; }
.row.two { padding-left: 94px; grid-template-columns: 112px 96px; }
.row dt { line-height: 14px; }
.row dd { line-height: 16px; }
.row .out dt { margin-left: -8px; }
.row .in dd { margin-left: 9px; }
.avg { height: 69px; padding: 5px 0 0 29px; display: grid; grid-template-columns: 88px 72px 80px 1fr; grid-auto-rows: 20px; line-height: 20px; position: relative; }
.avg b { line-height: 24px; font-size: 19px; }
.mark { position: absolute; border: 3px solid #f81cf8; }
.m1 { right: -2px; top: -5px; width: 89px; height: 47px; }
.m2 { left: -3px; right: -3px; top: 1px; bottom: 0; }
.m3 { left: -3px; top: 0; width: 190px; height: 40px; }
.acc { height: 27px; line-height: 30px; padding-left: 14px; display: grid; grid-template-columns: 124px 1fr; }
.notes { width: 280px; height: 256px; flex: none; margin: 128px -60px 0 28px; overflow: hidden; font-size: 20px; line-height: 56px; color: #ff0; white-space: nowrap; }
.shift { position: absolute; left: 1114px; top: 0; border: 6px solid transparent; border-top: 6px solid #8494a8; border-bottom: 0; }
.candle { position: absolute; left: 0; top: 349px; width: 1px; height: 17px; background: #0f0; }
.prices { padding: 17px 0 0; margin-bottom: -20px; font-size: 12px; line-height: 49px; }
.prices li { height: 49px; display: flex; align-items: center; }
.prices li::before { content: ""; width: 3px; border-top: 1px solid #fff; margin-right: 3px; }
.prices .now { padding-bottom: 3px; }
.prices .now::before { margin-right: 0; width: 1px; }
.prices .now span { background: #fff; color: #000; width: 56px; padding-left: 5px; line-height: 14px; }
.times { grid-column: 1 / -1; display: flex; font-size: 12px; line-height: 22px; }
.times li { width: 96px; flex: none; white-space: nowrap; background: linear-gradient(#fff, #fff) 0 0 / 1px 4px no-repeat; }
.charttabs { height: 27px; display: flex; border-top: 2px solid #fff; color: #808080; position: relative; border-bottom: 1px solid #fff; padding-left: 5px; box-shadow: inset 0 1px #000; font-size: 16px; }
.charttabs button { height: 23px; width: 116px; position: relative; }
.charttabs button::after { content: ""; position: absolute; right: -1px; top: 4px; height: 17px; border-right: 1px solid #808080; }
.charttabs button:nth-child(2)::after, .charttabs .current::after { display: none; }
.charttabs .current { background: #fff; color: #000; border: 2px solid #000; border-top: 0; padding-top: 2px; }
.nav { margin-left: auto; display: flex; align-items: center; gap: 20px; padding-right: 8px; }
.nav i { border: 4px solid transparent; }
.nav .prev { border-right-color: #a0a0a0; border-left: 0; }
.nav .next { border-left-color: #a0a0a0; border-right: 0; }

.terminal { padding: 5px 4px 4px 0; }
.orders { height: 64px; overflow: hidden; border-top: 1px solid #a0a0a0; border-bottom: 1px solid #000; padding-right: 23px; }
.trades { width: 100%; background: #fff; }
.trades th { height: 26px; font-weight: 400; text-align: right; padding-right: 5px; border-right: 1px solid #e0e0e0; }
.trades td { height: 26px; text-align: right; padding-right: 5px; overflow: hidden; }
.trades td:first-child { text-align: left; text-indent: -10px; }
.c1 { width: 129px; } .c2 { width: 257px; } .c3 { width: 128px; } .c4 { width: 100px; } .c5 { width: 142px; }
.sum td { background: #c6c6c6; font-weight: 700; }
.trades .sum td { line-height: 24px; padding-bottom: 2px; }
.pend td { background: #ebebeb; border-right: 1px solid #c6c6c6; line-height: 20px; vertical-align: top; }
.trades .pend td:first-child { text-indent: -4px; }
.termtabs { height: 27px; display: flex; border: 0 solid; border-image: linear-gradient(#000 22px, #f0f0f0 22px) 1; border-width: 0 0 0 2px; box-shadow: 0 1px #fff; color: #808080; }
.termtabs button { height: 19px; margin-top: 3px; padding: 0 12px; line-height: 19px; border-right: 1px solid #808080; display: flex; }
.termtabs sub { font-size: 13px; color: #f01010; line-height: 26px; margin-left: 3px; font-weight: 600; vertical-align: baseline; }
.status { height: 31px; border-top: 1px solid #a0a0a0; border-bottom: 1px solid #b4c0c6; display: flex; align-items: center; white-space: nowrap; }
.status span { height: 25px; line-height: 28px; padding-left: 5px; border-left: 1px solid #a0a0a0; flex: none; }
.status .help { flex: 1; border: 0; padding: 0; text-indent: -6px; }
.prof { width: 156px; } .w144 { width: 144px; } .w98 { width: 98px; } .w94 { width: 94px; } .w96 { width: 96px; } .w92 { width: 92px; }
.net { width: 172px; display: flex; align-items: center; gap: 6px; }

.taskbar { height: 58px; display: flex; justify-content: space-between; background: linear-gradient(90deg, #e0eaed, #d6e9f1 30%, #d9ecf4 80%, #dfe8f2); }
.apps { display: flex; gap: 7px; padding: 5px 0 0; margin-left: -3px; }
.apps button { width: 48px; height: 48px; border-radius: 4px; display: grid; place-items: center; position: relative; }
.apps svg { width: 30px; height: 30px; }
.apps .active { background: #f1f8fa; border: 1px solid #e6eff2; }
.run::after { content: ""; position: absolute; left: 20px; bottom: 0; width: 8px; height: 4px; border-radius: 2px; background: #868e92; }
.active::after { left: 13px; width: 20px; background: #1f8090; }
.gmi { font: 700 8px "Liberation Sans", sans-serif; fill: #fff; }
.tray { display: flex; align-items: center; padding-right: 25px; }
.tray svg { width: 20px; height: 20px; }
.tray .g1 { margin-left: 20px; } .tray .g2 { margin-left: 20px; } .tray .g3 { margin-left: 28px; } .tray .g4 { margin-left: 28px; } .tray .g5 { margin-left: 10px; } .tray .g6 { margin-left: 10px; }
.clock { margin-left: 18px; display: flex; flex-direction: column; align-items: flex-end; position: relative; font-size: 14px; }
.clock b { position: absolute; right: -9px; top: 0; width: 10px; height: 10px; border-radius: 5px; background: #f00; color: #fff; font-size: 8px; line-height: 10px; text-align: center; }
.tray .bell { margin-left: 14px; }
.watermark { position: absolute; inset: 0; width: 100%; height: 100%; pointer-events: none; z-index: 5; }
.wm { font: 37px "Liberation Sans", sans-serif; stroke-linejoin: round; }
```
FILE: app.js
```js
const quotes = [
  ["PY", "98.205", "98.220", 15, "up"], ["SD", "2516.69", "2516.73", 4, "sel"],
  ["AD", "0.91460", "0.91473", 13, "up"], ["HF", "0.57322", "0.57334", 12, "down"],
  ["ZD", "1.08949", "1.08968", 19, "up"], ["GD", "0.88624", "0.88640", 16, "up"],
  ["SD", "0.68030", "0.68035", 5, "down"], ["HF", "0.62670", "0.62701", 31, "up"],
  ["PY", "107.368", "107.388", 20, "up"], ["GD", "0.96892", "0.96912", 20, "down"],
  ["Y", "171.305", "171.348", 43, "up"], ["GD", "1.54574", "1.54641", 67, "up"]
];
document.getElementById("quotes").innerHTML = quotes.map(q =>
  `<tr class="${q[4]}">${q.slice(0, 4).map(v => `<td>${v}</td>`).join("")}</tr>`).join("");

const weeks = `08.26-08.30 7 2.10 256.52 8.55% 19355.67
08.19-08.23 15 4.50 631.96 21.07% 19099.15
08.12-08.16 9 2.70 5.96 0.20% 18467.19
08.05-08.09 11 3.30 -110.73 -3.69% 18461.23
07.29-08.02 17 5.10 263.21 8.77% 18571.96
07.22-07.26 11 3.30 2319.79 77.33% 18308.75
07.15-07.19 10 3.00 1044.22 34.81% 15988.96
07.08-07.12 9 2.70 33.47 1.12% 14944.74
07.01-07.05 17 5.10 -318.53 -10.62% 14911.27
06.24-06.28 11 3.30 2103.16 70.11% 15229.80
06.17-06.21 14 4.20 982.91 32.76% 13126.64
06.10-06.14 12 3.60 274.43 9.15% 12143.73
06.03-06.07 11 3.30 610.57 20.35% 11869.30
05.27-05.31 17 5.10 -982.63 -32.75% 11258.73
05.20-05.24 12 3.60 2219.56 73.99% 12241.36
05.13-05.17 14 4.20 -738.10 -24.60% 10021.80
05.06-05.10 15 4.50 -1071.86 -35.73% 10759.90
04.29-05.03 7 2.10 637.00 21.23% 11831.76
04.22-04.26 13 3.90 719.09 23.97% 11194.76
04.15-04.19 13 3.90 -122.44 -4.08% 10475.67
04.08-04.12 8 2.40 122.06 4.07% 10598.11
04.01-04.05 9 2.70 2308.01 76.93% 10476.05`.split("\n").map(r => r.split(" "));
document.getElementById("weeks").innerHTML = weeks.map((w, i) => {
  const float = i ? ["0.00", "0.00%"] : ["1236.87", "6.48%"];
  const nil = v => `<td class="nil">${v}</td>`;
  const up = v => `<td>${v}</td>`;
  return `<tr class="${w[3][0] === "-" ? "loss" : "gain"}">` + w.slice(0, 5).map(up).join("") +
    nil("0.00") + nil("0.00%") + float.map(i ? nil : up).join("") + up(w[5]) + "</tr>";
}).join("");

const prices = ["0.91940", "0.91695", "0.91460", "0.91210", "0.90965", "0.90720", "0.90480", "0.90235",
  "0.89990", "0.89750", "0.89505", "0.89260", "0.89020", "0.88775", "0.88530"];
document.getElementById("prices").innerHTML = prices.map(p =>
  `<li class="${p === "0.91460" ? "now" : "step"}"><span>${p}</span></li>`).join("");

const times = ["25 Jul 2024", "29 Jul 20:00", "31 Jul 20:00", "2 Aug 20:00", "6 Aug 20:00", "8 Aug 20:00",
  "12 Aug 20:00", "14 Aug 20:00", "16 Aug 20:00", "20 Aug 20:00", "22 Aug 20:00", "26 Aug 20:00"];
document.getElementById("times").innerHTML = times.map(t => `<li>${t}</li>`).join("");
```
